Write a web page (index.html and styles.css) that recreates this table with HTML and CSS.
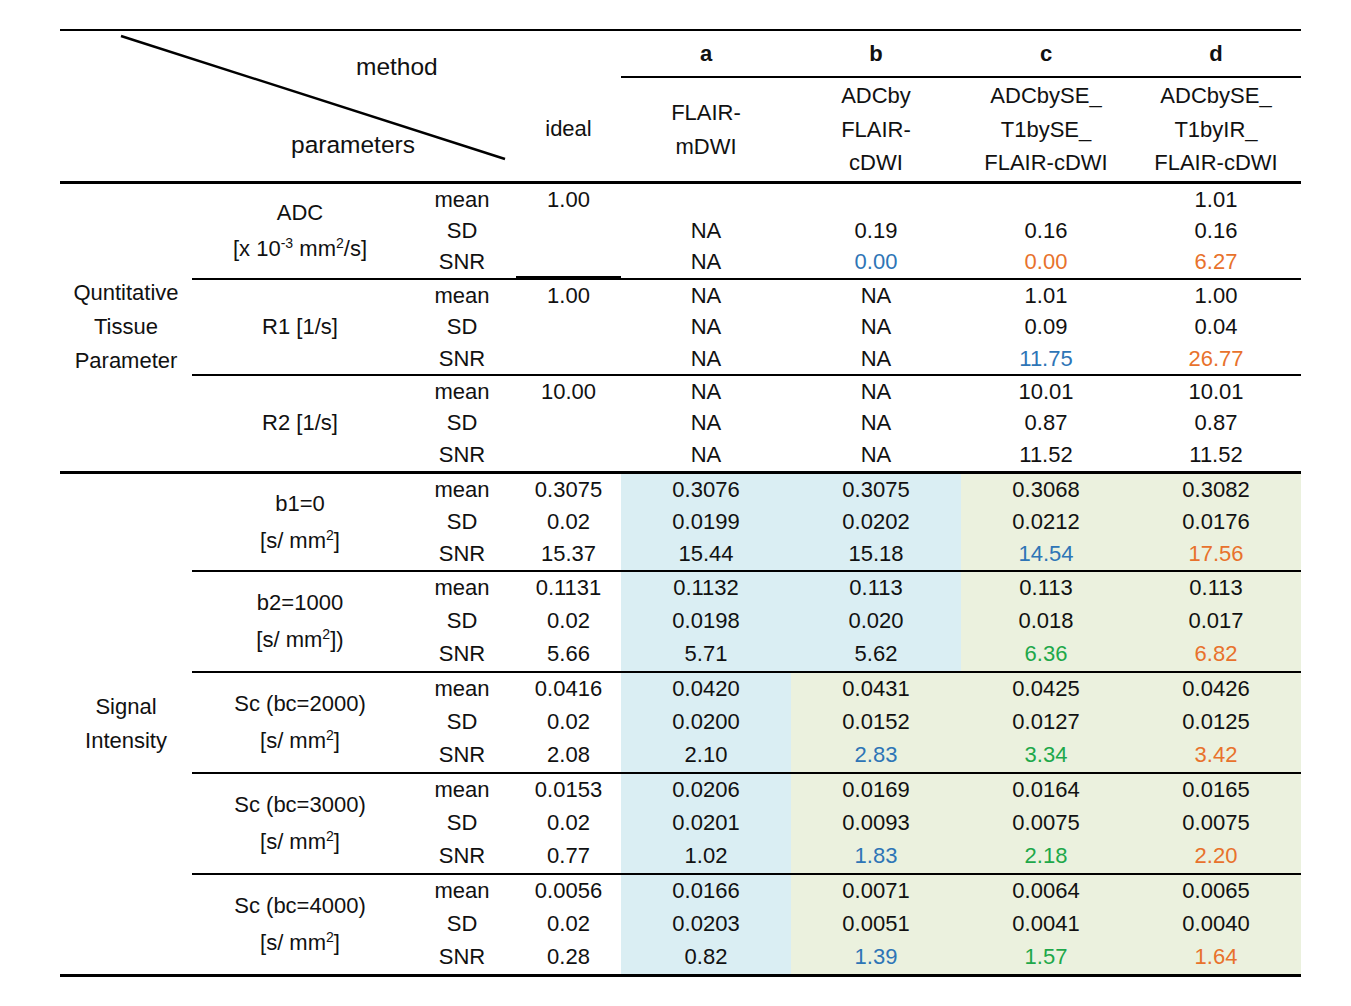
FILE: index.html
```html
<!DOCTYPE html>
<html>
<head>
<meta charset="utf-8">
<link rel="stylesheet" href="styles.css">
</head>
<body>
<div class="page">
<table class="tbl">
  <colgroup>
    <col class="c-grp"><col class="c-par"><col class="c-stat"><col class="c-ideal">
    <col class="c-m"><col class="c-m"><col class="c-m"><col class="c-m">
  </colgroup>
  <thead>
    <tr class="hr1">
      <th colspan="3" rowspan="2" class="diag-cell">
        <div class="diag">
          <svg class="diag-line" width="456" height="150" viewBox="0 0 456 150"><line x1="61" y1="5" x2="445" y2="128" stroke="#000" stroke-width="2.4"/></svg>
          <span class="lbl-method">method</span>
          <span class="lbl-param">parameters</span>
        </div>
      </th>
      <th class="blank"></th>
      <th class="mh">a</th>
      <th class="mh">b</th>
      <th class="mh">c</th>
      <th class="mh">d</th>
    </tr>
    <tr class="hr2">
      <th class="ideal">ideal</th>
      <th class="mname">FLAIR-<br>mDWI</th>
      <th class="mname">ADCby<br>FLAIR-<br>cDWI</th>
      <th class="mname">ADCbySE_<br>T1bySE_<br>FLAIR-cDWI</th>
      <th class="mname">ADCbySE_<br>T1byIR_<br>FLAIR-cDWI</th>
    </tr>
  </thead>
  <tbody class="sec1">
    <tr class="hq">
      <td rowspan="9" class="grp grp1">Quntitative<br>Tissue<br>Parameter</td>
      <td rowspan="3" class="par bb">ADC<br>[x 10<sup>-3</sup> mm<sup>2</sup>/s]</td>
      <td>mean</td><td>1.00</td><td></td><td></td><td></td><td>1.01</td>
    </tr>
    <tr class="hq"><td>SD</td><td></td><td>NA</td><td>0.19</td><td>0.16</td><td>0.16</td></tr>
    <tr class="hq sep"><td>SNR</td><td class="ideal-adc"></td><td>NA</td><td class="blu">0.00</td><td class="org">0.00</td><td class="org">6.27</td></tr>
    <tr class="hq">
      <td rowspan="3" class="par bb">R1 [1/s]</td>
      <td>mean</td><td>1.00</td><td>NA</td><td>NA</td><td>1.01</td><td>1.00</td>
    </tr>
    <tr class="hq"><td>SD</td><td></td><td>NA</td><td>NA</td><td>0.09</td><td>0.04</td></tr>
    <tr class="hq sep"><td>SNR</td><td></td><td>NA</td><td>NA</td><td class="blu">11.75</td><td class="org">26.77</td></tr>
    <tr class="hq">
      <td rowspan="3" class="par thick">R2 [1/s]</td>
      <td>mean</td><td>10.00</td><td>NA</td><td>NA</td><td>10.01</td><td>10.01</td>
    </tr>
    <tr class="hq"><td>SD</td><td></td><td>NA</td><td>NA</td><td>0.87</td><td>0.87</td></tr>
    <tr class="hq septhick"><td>SNR</td><td></td><td>NA</td><td>NA</td><td>11.52</td><td>11.52</td></tr>
  </tbody>
  <tbody class="sec2">
    <tr class="hb1">
      <td rowspan="15" class="grp grp2">Signal<br>Intensity</td>
      <td rowspan="3" class="par par2 bb">b1=0<br>[s/ mm<sup>2</sup>]</td>
      <td>mean</td><td>0.3075</td><td class="bgb">0.3076</td><td class="bgb">0.3075</td><td class="bgg">0.3068</td><td class="bgg">0.3082</td>
    </tr>
    <tr class="hb1"><td>SD</td><td>0.02</td><td class="bgb">0.0199</td><td class="bgb">0.0202</td><td class="bgg">0.0212</td><td class="bgg">0.0176</td></tr>
    <tr class="hb1 sep"><td>SNR</td><td>15.37</td><td class="bgb">15.44</td><td class="bgb">15.18</td><td class="bgg blu">14.54</td><td class="bgg org">17.56</td></tr>
    <tr class="hs">
      <td rowspan="3" class="par par2 bb">b2=1000<br>[s/ mm<sup>2</sup>])</td>
      <td>mean</td><td>0.1131</td><td class="bgb">0.1132</td><td class="bgb">0.113</td><td class="bgg">0.113</td><td class="bgg">0.113</td>
    </tr>
    <tr class="hs"><td>SD</td><td>0.02</td><td class="bgb">0.0198</td><td class="bgb">0.020</td><td class="bgg">0.018</td><td class="bgg">0.017</td></tr>
    <tr class="hs sep"><td>SNR</td><td>5.66</td><td class="bgb">5.71</td><td class="bgb">5.62</td><td class="bgg grn">6.36</td><td class="bgg org">6.82</td></tr>
    <tr class="hs">
      <td rowspan="3" class="par par2 bb">Sc (bc=2000)<br>[s/ mm<sup>2</sup>]</td>
      <td>mean</td><td>0.0416</td><td class="bgb">0.0420</td><td class="bgg">0.0431</td><td class="bgg">0.0425</td><td class="bgg">0.0426</td>
    </tr>
    <tr class="hs"><td>SD</td><td>0.02</td><td class="bgb">0.0200</td><td class="bgg">0.0152</td><td class="bgg">0.0127</td><td class="bgg">0.0125</td></tr>
    <tr class="hs sep"><td>SNR</td><td>2.08</td><td class="bgb">2.10</td><td class="bgg blu">2.83</td><td class="bgg grn">3.34</td><td class="bgg org">3.42</td></tr>
    <tr class="hs">
      <td rowspan="3" class="par par2 bb">Sc (bc=3000)<br>[s/ mm<sup>2</sup>]</td>
      <td>mean</td><td>0.0153</td><td class="bgb">0.0206</td><td class="bgg">0.0169</td><td class="bgg">0.0164</td><td class="bgg">0.0165</td>
    </tr>
    <tr class="hs"><td>SD</td><td>0.02</td><td class="bgb">0.0201</td><td class="bgg">0.0093</td><td class="bgg">0.0075</td><td class="bgg">0.0075</td></tr>
    <tr class="hs sep"><td>SNR</td><td>0.77</td><td class="bgb">1.02</td><td class="bgg blu">1.83</td><td class="bgg grn">2.18</td><td class="bgg org">2.20</td></tr>
    <tr class="hs">
      <td rowspan="3" class="par par2 thick">Sc (bc=4000)<br>[s/ mm<sup>2</sup>]</td>
      <td>mean</td><td>0.0056</td><td class="bgb">0.0166</td><td class="bgg">0.0071</td><td class="bgg">0.0064</td><td class="bgg">0.0065</td>
    </tr>
    <tr class="hs"><td>SD</td><td>0.02</td><td class="bgb">0.0203</td><td class="bgg">0.0051</td><td class="bgg">0.0041</td><td class="bgg">0.0040</td></tr>
    <tr class="hs septhick"><td>SNR</td><td>0.28</td><td class="bgb">0.82</td><td class="bgg blu">1.39</td><td class="bgg grn">1.57</td><td class="bgg org">1.64</td></tr>
  </tbody>
</table>
</div>
</body>
</html>
```

FILE: styles.css
```css
html, body {
  margin: 0;
  padding: 0;
  background: #fff;
}
.page {
  padding: 29px 0 0 60px;
}
.tbl {
  border-collapse: collapse;
  table-layout: fixed;
  width: 1240px;
  font-family: "Liberation Sans", Arial, sans-serif;
  font-size: 22px;
  color: #111;
  border-top: 2px solid #000;
  border-bottom: 3px solid #000;
}
.c-grp { width: 132px; }
.c-par { width: 216px; }
.c-stat { width: 108px; }
.c-ideal { width: 105px; }
.c-m { width: 170px; }

th, td {
  padding: 0;
  text-align: center;
  vertical-align: middle;
  font-weight: normal;
  white-space: nowrap;
}
.hr1 th { height: 45px; }
.hr1 .mh {
  font-weight: bold;
  border-bottom: 2px solid #000;
}
.hr2 th {
  height: 103px;
  line-height: 33.5px;
  border-bottom: 3px solid #000;
}
.diag-cell {
  border-bottom: 3px solid #000;
  vertical-align: top;
}
.diag {
  position: relative;
  height: 149px;
  display: flex;
  flex-direction: column;
  align-items: flex-start;
  font-size: 24.5px;
  line-height: 28px;
}
.diag-line {
  position: absolute;
  left: 0;
  top: 0;
}
.lbl-method {
  margin: 22px 0 0 296px;
}
.lbl-param {
  margin: 50px 0 0 231px;
}

.hq td { height: 31.4px; }
.hb1 td { height: 32px; }
.hs td { height: 33px; }

.grp { line-height: 34px; }
.par { line-height: 36px; }
.par2 { line-height: 37px; }

.sep td, td.bb { border-bottom: 2px solid #000; }
.septhick td, td.thick, .grp1 { border-bottom: 3px solid #000; }
td.ideal-adc { box-shadow: inset 0 -2px 0 #000; }

sup {
  font-size: 0.64em;
  line-height: 0;
  vertical-align: 0.6em;
}

.bgb { background: #daeef3; }
.bgg { background: #ebf1de; }
.blu { color: #2e75b6; }
.org { color: #e8722c; }
.grn { color: #1ea84a; }
```
